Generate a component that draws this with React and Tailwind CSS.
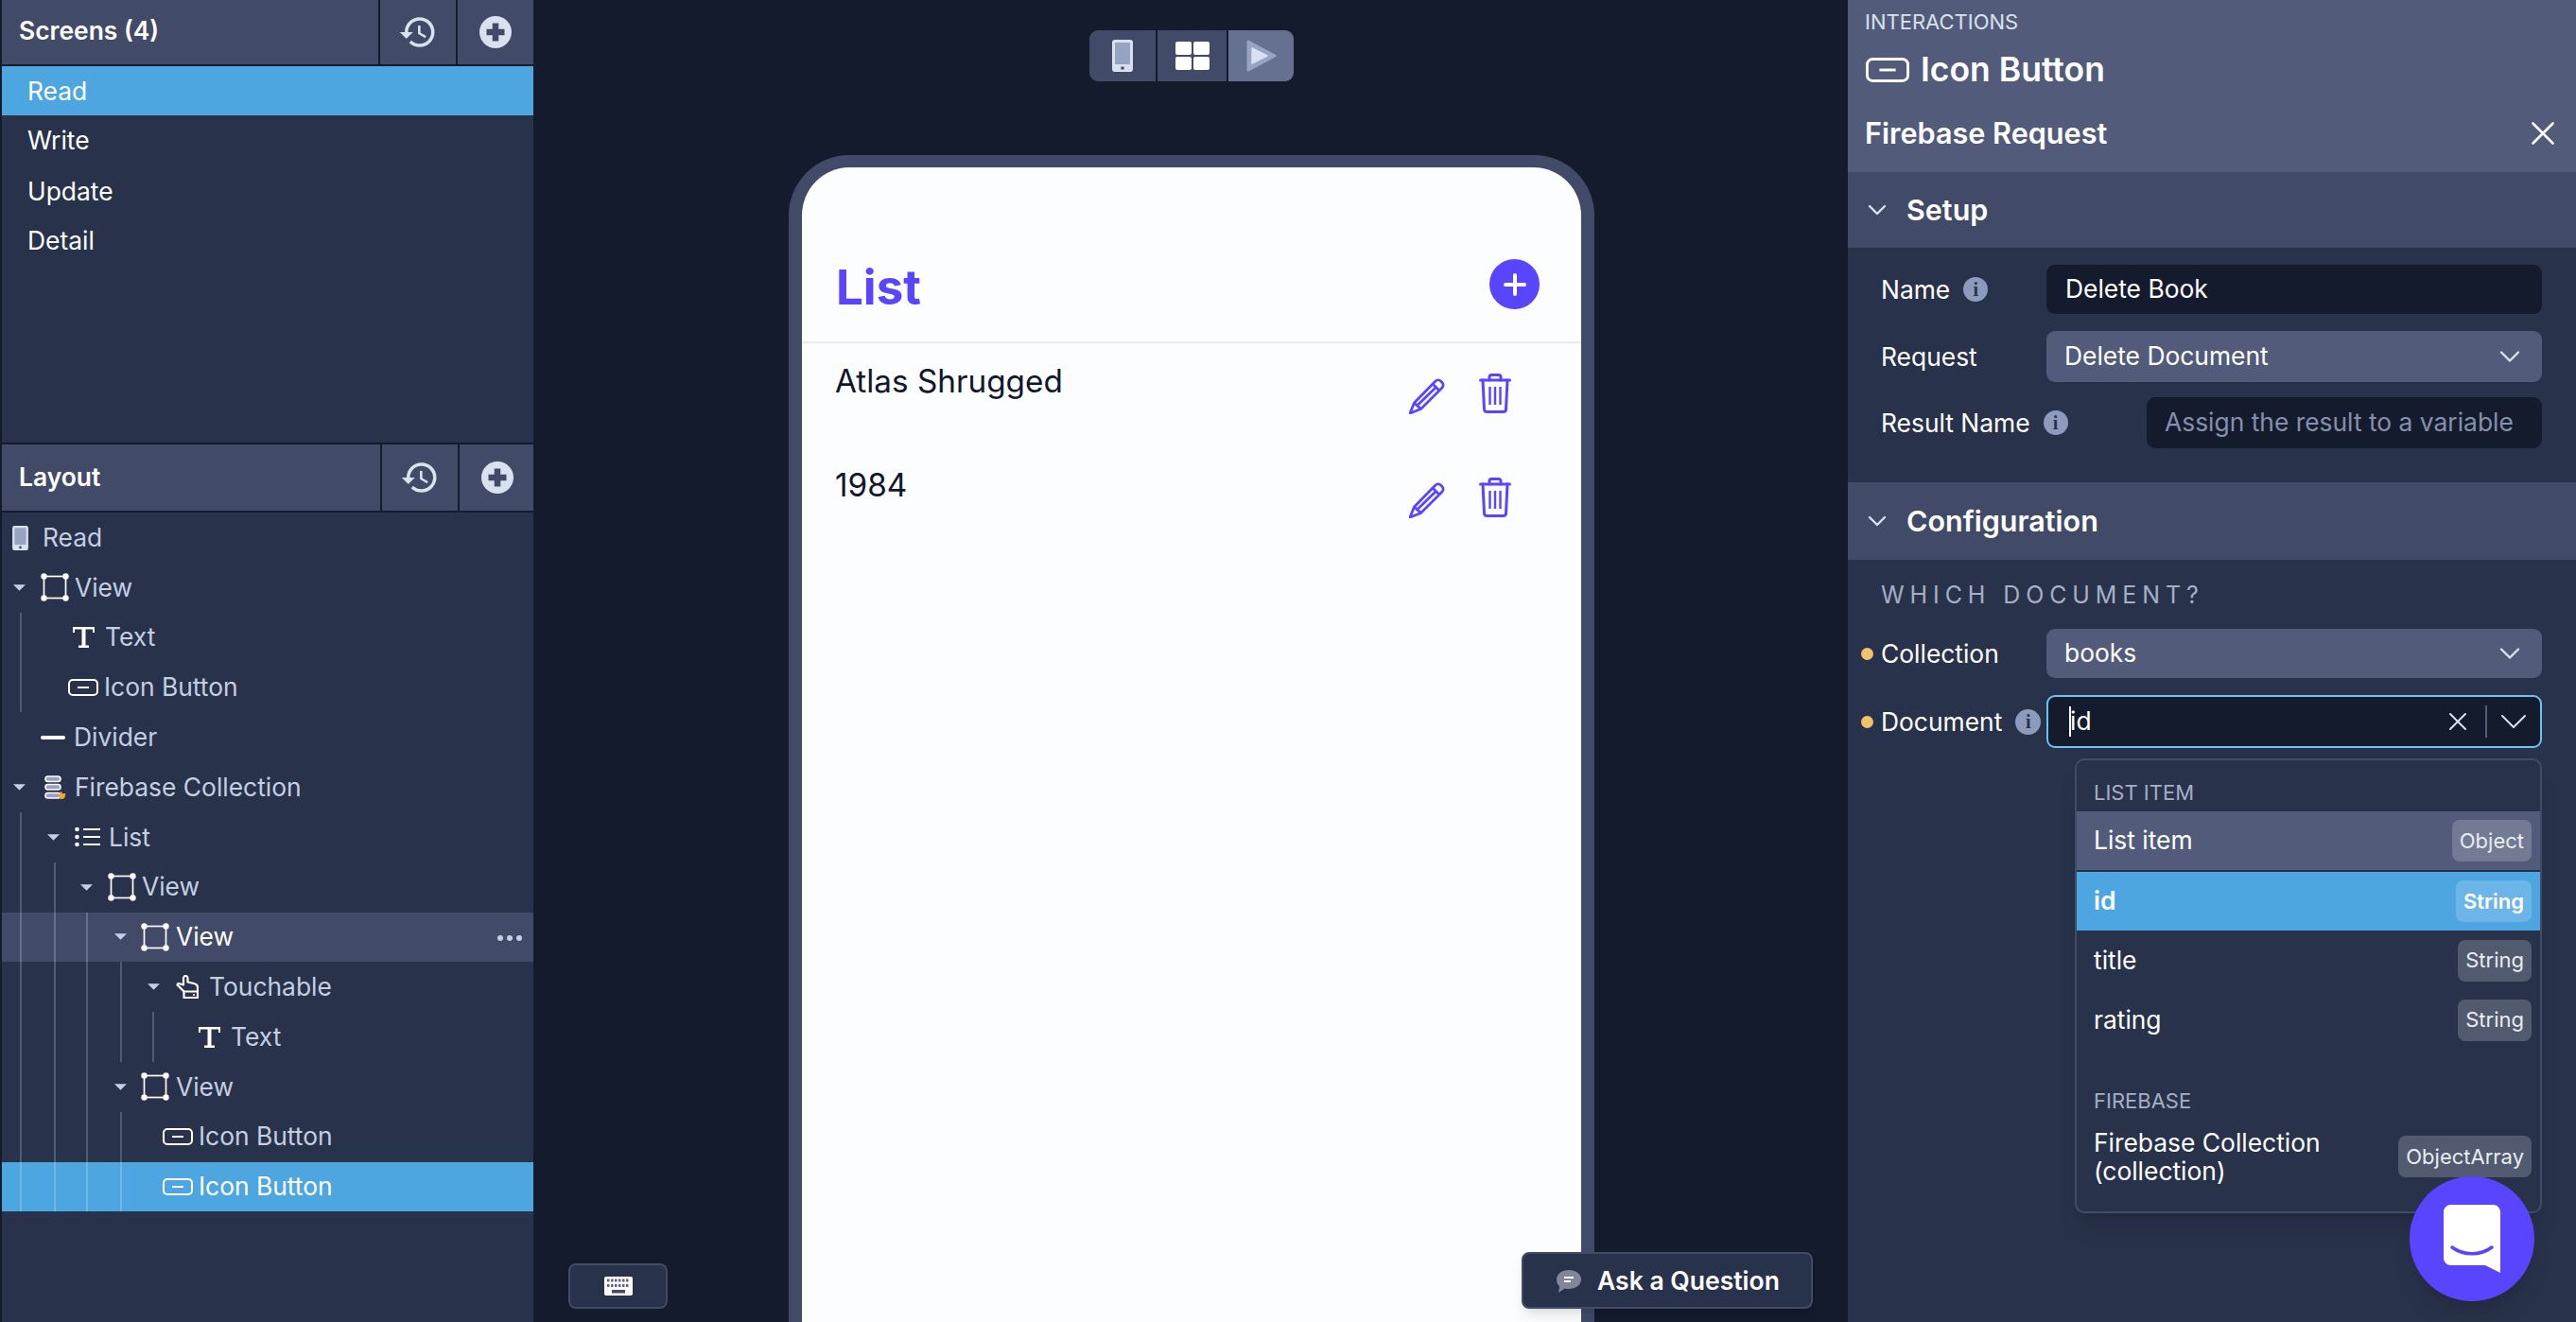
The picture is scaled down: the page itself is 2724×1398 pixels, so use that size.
import React from 'react';
import { ChevronDown, X } from 'lucide-react';
import { MdHistory } from 'react-icons/md';

const font = { fontFamily: 'Inter, "Noto Sans", sans-serif' };

const PhoneIcon = ({ className }) => (
  <svg viewBox="0 0 22 34" className={className}>
    <rect width="22" height="34" rx="3" fill="#d8e1ee" />
    <rect x="3" y="3" width="16" height="23" rx="1" fill="#97a3c3" />
    <circle cx="11" cy="30" r="1.8" fill="#414b68" />
  </svg>
);

const ViewIcon = ({ className }) => (
  <svg viewBox="0 0 30 30" className={className} fill="none">
    <rect x="3.500" y="3.500" width="23" height="23" stroke="currentColor" strokeWidth="1.700" />
    <circle cx="3.500" cy="3.500" r="3.200" fill="currentColor" />
    <circle cx="26.500" cy="3.500" r="3.200" fill="currentColor" />
    <circle cx="3.500" cy="26.500" r="3.200" fill="currentColor" />
    <circle cx="26.500" cy="26.500" r="3.200" fill="currentColor" />
  </svg>
);

const TextIcon = ({ className }) => (
  <svg viewBox="0 0 23 22" className={className} fill="currentColor">
    <path d="M0 0h23v6h-2V2.500H13.500V19.500h3.500V22H6v-2.500h3.500V2.500H2V6H0z" />
  </svg>
);

const ButtonIcon = ({ className }) => (
  <svg viewBox="0 0 32 18" className={className} fill="none" stroke="currentColor" strokeWidth="2">
    <rect x="1" y="1" width="30" height="16" rx="4" />
    <path d="M10 9h12" />
  </svg>
);

const DividerIcon = ({ className }) => (
  <svg viewBox="0 0 26 4" className={className}>
    <rect width="26" height="4" rx="2" fill="currentColor" />
  </svg>
);

const FirebaseIcon = ({ className }) => (
  <svg viewBox="0 0 24 26" className={className}>
    <rect x="1" y="1" width="16" height="5.500" rx="2.700" fill="#97a3c3" stroke="#fff" strokeWidth="1.600" />
    <rect x="1" y="9.500" width="16" height="5.500" rx="2.700" fill="#97a3c3" stroke="#fff" strokeWidth="1.600" />
    <rect x="1" y="18.500" width="16" height="5.500" rx="2.700" fill="#97a3c3" stroke="#fff" strokeWidth="1.600" />
    <path d="M16 24c-1.500-3 .5-3.500 1-7 1.500.5 2 1.500 2.200 2.500.8-.5 1.500-.5 2.800-.5.500 3-1 6-3 6s-2.500-.2-3-1z" fill="#f5a623" />
  </svg>
);

const ListIcon = ({ className }) => (
  <svg viewBox="0 0 27 22" className={className} fill="currentColor">
    <circle cx="2.500" cy="3" r="2.300" />
    <circle cx="2.500" cy="11" r="2.300" />
    <circle cx="2.500" cy="19" r="2.300" />
    <rect x="9" y="2" width="18" height="2" />
    <rect x="9" y="10" width="18" height="2" />
    <rect x="9" y="18" width="18" height="2" />
  </svg>
);

const TouchIcon = ({ className }) => (
  <svg viewBox="0 0 24 25" className={className} fill="none" stroke="currentColor" strokeWidth="2.200" strokeLinejoin="round">
    <path d="M1.500 10.500c0-1.200 1.300-1.800 2.500-1.300l4 1.300V3.500C8 2 9.200 1 10.300 1s2.200 1 2.200 2.500v4l6.500 1.500c2.500.6 4 2 4 4.500v4H8.500z" />
    <path d="M8.500 17.500V24h14.500v-6.500" />
    <circle cx="19" cy="21" r="1" fill="currentColor" stroke="none" />
  </svg>
);

const PlusCircle = ({ className }) => (
  <svg viewBox="0 0 34 34" className={className}>
    <circle cx="17" cy="17" r="17" fill="#d8e1ee" />
    <path d="M17 7.500v19M7.500 17h19" stroke="#414b68" strokeWidth="6.500" />
  </svg>
);

const Caret = ({ className = '' }) => (
  <svg viewBox="0 0 14 7" className={`w-[13px] h-[7px] shrink-0 ${className}`}>
    <path d="M0 0h14L7 7z" fill="#c3cfe2" />
  </svg>
);

const InfoDot = ({ className = '' }) => (
  <span className={`flex items-center justify-center rounded-full bg-[#8d9abb] shrink-0 ${className}`}>
    <span className="text-[#28324a] text-[20px] font-black leading-none" style={{ fontFamily: '"Liberation Serif", serif' }}>i</span>
  </span>
);

const TREE = [
  { label: 'View', Icon: ViewIcon, size: 'w-[30px] h-[30px]', caret: true, pad: 'pl-[12px]', iconGap: 'ml-[16px]', textGap: 'ml-[6px]' },
  { label: 'Text', Icon: TextIcon, size: 'w-[23px] h-[22px]', pad: 'pl-[75px]', textGap: 'ml-[11px]', guides: ['left-[19px]'] },
  { label: 'Icon Button', Icon: ButtonIcon, size: 'w-[32px] h-[18px]', pad: 'pl-[70px]', textGap: 'ml-[6px]', guides: ['left-[19px]'] },
  { label: 'Divider', Icon: DividerIcon, size: 'w-[26px] h-[4px]', pad: 'pl-[41px]', textGap: 'ml-[9px]' },
  { label: 'Firebase Collection', Icon: FirebaseIcon, size: 'w-[24px] h-[26px]', caret: true, pad: 'pl-[12px]', iconGap: 'ml-[20px]', textGap: 'ml-[8px]' },
  { label: 'List', Icon: ListIcon, size: 'w-[27px] h-[22px]', caret: true, pad: 'pl-[48px]', iconGap: 'ml-[16px]', textGap: 'ml-[9px]', guides: ['left-[19px]'] },
  { label: 'View', Icon: ViewIcon, size: 'w-[30px] h-[30px]', caret: true, pad: 'pl-[83px]', iconGap: 'ml-[16px]', textGap: 'ml-[6px]', guides: ['left-[19px]', 'left-[55px]'] },
  { label: 'View', Icon: ViewIcon, size: 'w-[30px] h-[30px]', caret: true, pad: 'pl-[119px]', iconGap: 'ml-[15px]', textGap: 'ml-[7px]', hover: true, guides: ['left-[19px]', 'left-[55px]', 'left-[89px]'] },
  { label: 'Touchable', Icon: TouchIcon, size: 'w-[24px] h-[25px]', caret: true, pad: 'pl-[154px]', iconGap: 'ml-[17px]', textGap: 'ml-[11px]', guides: ['left-[19px]', 'left-[55px]', 'left-[89px]', 'left-[125px]'] },
  { label: 'Text', Icon: TextIcon, size: 'w-[23px] h-[22px]', pad: 'pl-[208px]', textGap: 'ml-[11px]', guides: ['left-[19px]', 'left-[55px]', 'left-[89px]', 'left-[125px]', 'left-[159px]'] },
  { label: 'View', Icon: ViewIcon, size: 'w-[30px] h-[30px]', caret: true, pad: 'pl-[119px]', iconGap: 'ml-[15px]', textGap: 'ml-[7px]', guides: ['left-[19px]', 'left-[55px]', 'left-[89px]'] },
  { label: 'Icon Button', Icon: ButtonIcon, size: 'w-[32px] h-[18px]', pad: 'pl-[170px]', textGap: 'ml-[6px]', guides: ['left-[19px]', 'left-[55px]', 'left-[89px]', 'left-[125px]'] },
  { label: 'Icon Button', Icon: ButtonIcon, size: 'w-[32px] h-[18px]', pad: 'pl-[170px]', textGap: 'ml-[6px]', selected: true, guides: ['left-[19px]', 'left-[55px]', 'left-[89px]', 'left-[125px]'] },
];

const TreeRow = ({ row }) => {
  const { Icon } = row;
  const bg = row.selected ? 'bg-[#4da6e0] text-white' : row.hover ? 'bg-[#414b68] text-white' : 'text-[#c3cfe2]';
  return (
    <div className={`relative h-[52.8px] flex items-center text-[26.4px] ${row.pad} ${bg}`}>
      {(row.guides || []).map((g) => (
        <span key={g} className={`absolute top-0 bottom-0 w-[2px] bg-white/20 ${g}`} />
      ))}
      {row.caret && <Caret />}
      <span className={`text-white flex ${row.iconGap || ''}`}>
        <Icon className={row.size} />
      </span>
      <span className={row.textGap}>{row.label}</span>
      {row.hover && (
        <span className="absolute right-[12px] top-[24px] flex gap-[4px]">
          <span className="w-[6px] h-[6px] rounded-full bg-[#c3cfe2]" />
          <span className="w-[6px] h-[6px] rounded-full bg-[#c3cfe2]" />
          <span className="w-[6px] h-[6px] rounded-full bg-[#c3cfe2]" />
        </span>
      )}
    </div>
  );
};

const PanelHeader = ({ title, className, btn, plusBtn, titlePad }) => (
  <div className={`flex gap-[2px] ${className}`}>
    <div className={`flex-1 bg-[#414b68] flex items-center pl-[18px] text-[26.4px] font-semibold text-white ${titlePad}`}>{title}</div>
    <div className={`bg-[#414b68] flex items-center justify-center ${btn}`}>
      <MdHistory className="w-[42px] h-[42px] text-[#d8e1ee]" />
    </div>
    <div className={`bg-[#414b68] flex items-center justify-center ${plusBtn}`}>
      <PlusCircle className="w-[34px] h-[34px]" />
    </div>
  </div>
);

const LeftPanel = () => (
  <aside className="w-[562px] ml-[2px] shrink-0 flex flex-col bg-[#141b2d]">
    <PanelHeader title="Screens (4)" className="h-[68px]" btn="w-[80px]" plusBtn="w-[80px]" titlePad="pb-[3px]" />
    <div className="mt-[2px] h-[398px] bg-[#28324a] text-[26.4px] text-white">
      <div className="h-[52px] bg-[#4da6e0] flex items-center pl-[27px] pt-[1px]">Read</div>
      <div className="h-[53px] flex items-center pl-[27px] pt-[1px]">Write</div>
      <div className="h-[53px] flex items-center pl-[27px] pt-[2px]">Update</div>
      <div className="h-[52px] flex items-center pl-[27px] pt-[1px]">Detail</div>
    </div>
    <PanelHeader title="Layout" className="mt-[2px] h-[70px]" btn="w-[80px]" plusBtn="w-[78px] pl-[2px]" titlePad="pb-[1px]" />
    <div className="mt-[2px] flex-1 bg-[#28324a]">
      <div className="h-[53px] flex items-center pl-[11px] text-[26.4px] text-[#c3cfe2]">
        <PhoneIcon className="w-[17px] h-[26px]" />
        <span className="ml-[15px]">Read</span>
      </div>
      {TREE.map((row, i) => (
        <TreeRow key={i} row={row} />
      ))}
    </div>
  </aside>
);

const Toolbar = () => (
  <div className="flex justify-center pt-[32px] pl-[2px]">
    <div className="flex h-[54px] w-[216px] rounded-[9px] overflow-hidden gap-[2px] bg-[#141b2d]">
      <div className="w-[70px] bg-[#414b68] flex items-center justify-center">
        <PhoneIcon className="w-[22px] h-[34px]" />
      </div>
      <div className="w-[73px] bg-[#414b68] flex items-center justify-center">
        <div className="grid grid-cols-2 gap-[2px] w-[36px] h-[30px]">
          <span className="bg-white rounded-[2px]" />
          <span className="bg-white rounded-[2px]" />
          <span className="bg-white rounded-[2px]" />
          <span className="bg-white rounded-[2px]" />
        </div>
      </div>
      <div className="flex-1 bg-[#667191] flex items-center justify-center">
        <svg viewBox="0 0 32 34" className="w-[32px] h-[34px]">
          <path d="M2 2l28 15L2 32z" fill="#97a3c3" stroke="#97a3c3" strokeWidth="3" strokeLinejoin="round" />
          <path d="M6 9l16 8-16 8z" fill="#d8e1ee" stroke="#d8e1ee" strokeWidth="1.500" strokeLinejoin="round" />
        </svg>
      </div>
    </div>
  </div>
);

const PencilIcon = ({ className }) => (
  <svg viewBox="0 0 38 38" className={className} fill="none" stroke="#5a45ff" strokeWidth="2.800" strokeLinejoin="round">
    <path d="M1 37l4.500-11L25 6l7 7-19.500 19.500z" />
    <path d="M9.500 28L28 10" />
    <path d="M5.500 26l7 6.500" />
    <path d="M25.500 5.500L28 3c1.500-1.500 4-1.500 5.500 0L35 4.500c1.500 1.500 1.500 4 0 5.500l-2.500 2.500" />
  </svg>
);

const TrashIcon = ({ className }) => (
  <svg viewBox="0 0 34 42" className={className} fill="none" stroke="#5a45ff" strokeWidth="3" strokeLinecap="round">
    <path d="M1.500 7h31" />
    <path d="M11 7V3.500C11 2 12 1.500 13.500 1.500h7C22 1.500 23 2 23 3.500V7" />
    <path d="M4 7l1.500 31c.1 1.800 1.200 2.500 3 2.500h17c1.800 0 2.900-.7 3-2.500L30 7" />
    <path d="M11.500 14v19M17 14v19M22.500 14v19" strokeWidth="2.400" strokeLinecap="butt" />
  </svg>
);

const BookRow = ({ title, className }) => (
  <div className={`flex ${className}`}>
    <div className="pl-[36px] -ml-[1px] text-[33.3px] leading-[40px] text-[#12162a] w-[643px]">{title}</div>
    <PencilIcon className="mt-[17px] w-[38px] h-[38px]" />
    <TrashIcon className="mt-[12px] ml-[36px] w-[34px] h-[42px]" />
  </div>
);

const Phone = () => (
  <div className="mt-[78px] ml-[270px] w-[852px] flex-1 border-x-[14px] border-t-[13px] border-[#414b68] rounded-t-[64px] bg-[#fcfdff]">
    <div className="h-[186px] border-b-2 border-[#e8eaef] flex pl-[36px] pr-[44px] items-start justify-between">
      <span className="mt-[93px] text-[51px] leading-[68px] font-bold text-[#5a45ff]">List</span>
      <span className="mt-[97px] w-[53px] h-[53px] rounded-full bg-[#5a45ff] flex items-center justify-center">
        <svg viewBox="0 0 26 26" className="w-[26px] h-[26px]" stroke="#fff" strokeWidth="4" strokeLinecap="round">
          <path d="M13 3v20M3 13h20" />
        </svg>
      </span>
    </div>
    <BookRow title="Atlas Shrugged" className="pt-[20px]" />
    <BookRow title="1984" className="pt-[55px]" />
  </div>
);

const Center = () => (
  <main className="relative flex-1 flex flex-col bg-[#141b2d]">
    <Toolbar />
    <Phone />
    <div className="absolute left-[37px] top-[1336px] w-[105px] h-[48px] rounded-[8px] bg-[#28324a] border-2 border-[#414b68] flex items-center justify-center">
      <svg viewBox="0 0 30 20" className="w-[30px] h-[20px]">
        <rect width="30" height="20" rx="2" fill="#fff" />
        <path d="M3 4h24M3 9.500h24" stroke="#5c6680" strokeWidth="3" strokeDasharray="2.500 1.500" />
        <rect x="8" y="14" width="14" height="3.500" fill="#414b68" />
      </svg>
    </div>
    <div className="absolute left-[1045px] top-[1324px] w-[308px] h-[60px] rounded-[8px] bg-[#28324a] border-2 border-[#414b68] shadow-lg flex items-center pl-[35px] pt-[1px] text-[26.5px] font-semibold text-white">
      <svg viewBox="0 0 26 24" className="w-[26px] h-[24px]">
        <path d="M13 0c7 0 13 4 13 10s-6 10-13 10c-1.500 0-3-.2-4.300-.6L2 24l1.200-6.500C1.200 15.600 0 13 0 10 0 4 6 0 13 0z" fill="#7f8798" />
        <path d="M8 8h10M8 12h7" stroke="#fff" strokeWidth="1.800" />
      </svg>
      <span className="ml-[17px]">Ask a Question</span>
    </div>
  </main>
);

const Field = ({ label, info, dot, children, className }) => (
  <div className={`relative flex items-center pl-[35px] pr-[36px] ${className}`}>
    {dot && <span className="absolute left-[14px] w-[13px] h-[13px] rounded-full bg-[#f2c16b]" />}
    <span className="pt-[1px] text-[26.4px] text-white">{label}</span>
    {info}
    {children}
  </div>
);

const Section = ({ title, className }) => (
  <div className={`bg-[#414b68] flex items-center pl-[15px] pb-[1px] text-[30.5px] font-semibold text-white ${className}`}>
    <ChevronDown className="w-[32px] h-[32px] text-[#d8e1ee]" strokeWidth={1.8} />
    <span className="ml-[15px]">{title}</span>
  </div>
);

const Badge = ({ children, className }) => (
  <span className={`h-[44px] flex items-center px-[8px] rounded-[8px] text-[22px] shrink-0 ${className}`}>{children}</span>
);

const Option = ({ label, type, className, badge, labelClass = '' }) => (
  <div className={`flex items-center justify-between pl-[18px] pr-[9px] text-[26.4px] text-white ${className}`}>
    <span className={labelClass}>{label}</span>
    <Badge className={badge}>{type}</Badge>
  </div>
);

const Dropdown = () => (
  <div className="absolute left-[240px] top-[802px] w-[494px] h-[481px] rounded-[10px] border-2 border-[#414b68] bg-[#28324a] shadow-xl">
    <div className="h-[54px] pt-[21px] pl-[18px] text-[22px] leading-[26px] text-[#a5afc6]">LIST ITEM</div>
    <Option label="List item" type="Object" className="h-[62px] bg-[#525c7a]" badge="bg-[#737a94] text-[#e8ecf3]" />
    <Option label="id" type="String" className="mt-[2px] h-[62px] bg-[#4da6e0]" badge="bg-[#6db5e8] font-semibold" labelClass="font-semibold" />
    <Option label="title" type="String" className="h-[63px]" badge="bg-[#525a70] text-[#e8ecf3]" />
    <Option label="rating" type="String" className="h-[63px]" badge="bg-[#525a70] text-[#e8ecf3]" />
    <div className="pt-[41px] pl-[18px] text-[22px] leading-[26px] text-[#a5afc6]">FIREBASE</div>
    <div className="mt-[16px] flex items-center justify-between pl-[18px] pr-[9px] text-[26.4px] leading-[30px] text-white">
      <span>Firebase Collection<br />(collection)</span>
      <Badge className="bg-[#525a70] text-[#e8ecf3]">ObjectArray</Badge>
    </div>
  </div>
);

const RightPanel = () => (
  <aside className="relative w-[770px] shrink-0 bg-[#28324a]">
    <div className="h-[182px] bg-[#525c7a] pl-[18px] pr-[14px] text-white">
      <div className="pt-[10px] text-[22px] leading-[26px] text-[#d8e1ee]">INTERACTIONS</div>
      <div className="mt-[16px] flex items-center h-[44px]">
        <ButtonIcon className="ml-[1px] w-[46px] h-[26px]" />
        <span className="ml-[12px] text-[35.5px] font-semibold">Icon Button</span>
      </div>
      <div className="mt-[23px] flex items-center justify-between h-[44px]">
        <span className="text-[30.6px] font-semibold">Firebase Request</span>
        <X className="w-[42px] h-[42px]" strokeWidth={1.5} />
      </div>
    </div>
    <Section title="Setup" className="h-[80px]" />
    <div className="h-[248px] pt-[18px]">
      <Field label="Name" info={<InfoDot className="ml-[14px] w-[26px] h-[26px]" />}>
        <div className="ml-auto w-[524px] h-[52px] rounded-[9px] bg-[#141b2d] flex items-center pl-[20px] text-[26.4px] text-white">Delete Book</div>
      </Field>
      <Field label="Request" className="mt-[18px]">
        <div className="ml-auto w-[524px] h-[54px] rounded-[9px] bg-[#525c7a] flex items-center justify-between pl-[19px] pr-[16px] text-[26.4px] text-white">
          Delete Document
          <ChevronDown className="w-[36px] h-[36px] text-[#d8e1ee]" strokeWidth={1.6} />
        </div>
      </Field>
      <Field label="Result Name" info={<InfoDot className="ml-[14px] w-[26px] h-[26px]" />} className="mt-[16px]">
        <div className="ml-auto w-[418px] h-[54px] rounded-[9px] bg-[#141b2d] flex items-center pl-[19px] text-[26.4px] text-[#8590ad]">Assign the result to a variable</div>
      </Field>
    </div>
    <Section title="Configuration" className="h-[82px]" />
    <div className="pt-[22px]">
      <div className="pl-[35px] text-[25px] leading-[30px] tracking-[5.9px] text-[#a5afc6]">WHICH DOCUMENT?</div>
      <Field label="Collection" dot className="mt-[21px]">
        <div className="ml-auto w-[524px] h-[52px] rounded-[9px] bg-[#525c7a] flex items-center justify-between pl-[19px] pr-[16px] text-[26.4px] text-white">
          books
          <ChevronDown className="w-[36px] h-[36px] text-[#d8e1ee]" strokeWidth={1.6} />
        </div>
      </Field>
      <Field label="Document" dot info={<InfoDot className="ml-[14px] w-[27px] h-[27px]" />} className="mt-[18px]">
        <div className="ml-auto w-[524px] h-[56px] rounded-[9px] bg-[#141b2d] border-2 border-[#6fc3ef] flex items-center pl-[22px] pr-[4px] text-[26.4px] text-white">
          <span className="w-[2px] h-[32px] bg-white -mr-[1px]" />
          id
          <X className="ml-auto w-[32px] h-[32px] text-[#d8e1ee]" strokeWidth={1.5} />
          <span className="ml-[13px] w-[2px] h-[34px] bg-[#525c7a]" />
          <ChevronDown className="ml-[4px] w-[48px] h-[48px] text-[#d8e1ee]" strokeWidth={1} />
        </div>
      </Field>
    </div>
    <Dropdown />
    <div className="absolute left-[594px] top-[1244px] w-[132px] h-[132px] rounded-full bg-[#5a45ff] shadow-xl flex items-center justify-center">
      <svg viewBox="0 0 60 72" className="w-[60px] h-[72px]">
        <path d="M8 0h44c4.500 0 8 3.500 8 8v64L44 64H8c-4.500 0-8-3.500-8-8V8C0 3.500 3.500 0 8 0z" fill="#fff" />
        <path d="M9 45c12 9 30 9 42 0" fill="none" stroke="#5a45ff" strokeWidth="3.500" strokeLinecap="round" />
      </svg>
    </div>
  </aside>
);

export default function App() {
  return (
    <div className="flex w-[2724px] h-[1398px] overflow-hidden bg-[#141b2d]" style={font}>
      <LeftPanel />
      <Center />
      <RightPanel />
    </div>
  );
}
